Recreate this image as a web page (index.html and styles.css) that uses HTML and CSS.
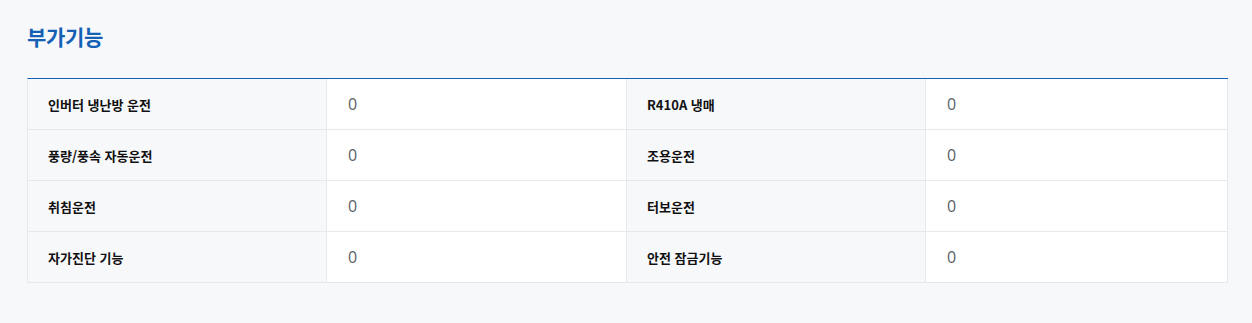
FILE: index.html
```html
<!DOCTYPE html>
<html lang="ko">
<head>
<meta charset="utf-8">
<link rel="stylesheet" href="styles.css">
</head>
<body>
<section class="section">
  <h2 class="title">부가기능</h2>
  <div class="spec">
    <div class="row">
      <div class="th">인버터 냉난방 운전</div><div class="td">0</div>
      <div class="th">R410A 냉매</div><div class="td">0</div>
    </div>
    <div class="row">
      <div class="th">풍량/풍속 자동운전</div><div class="td">0</div>
      <div class="th">조용운전</div><div class="td">0</div>
    </div>
    <div class="row">
      <div class="th">취침운전</div><div class="td">0</div>
      <div class="th">터보운전</div><div class="td">0</div>
    </div>
    <div class="row">
      <div class="th">자가진단 기능</div><div class="td">0</div>
      <div class="th">안전 잠금기능</div><div class="td">0</div>
    </div>
  </div>
</section>
</body>
</html>
```
FILE: styles.css
```css
html, body {
  margin: 0;
  padding: 0;
  background: #f7f8fa;
}
body {
  font-family: "Noto Sans CJK KR", "Noto Sans", sans-serif;
  color: #111;
}
.section {
  padding: 21px 25px 40px 27px;
}
.title {
  margin: 0;
  font-size: 21px;
  line-height: 30px;
  font-weight: 700;
  color: #1360b4;
  letter-spacing: -0.3px;
}
.spec {
  margin-top: 27px;
  width: 1200px;
  border-top: 1px solid #1360b4;
  border-left: 1px solid #e7e8eb;
}
.row {
  display: grid;
  grid-template-columns: 299px 300px 299px 302px;
}
.th, .td {
  border-bottom: 1px solid #e7e8eb;
  border-right: 1px solid #e7e8eb;
  display: flex;
  align-items: center;
  box-sizing: border-box;
  height: 51px;
}
.th {
  background: #f7f8fa;
  padding-left: 20px;
  font-size: 13px;
  font-weight: 700;
  color: #111;
}
.td {
  background: #fff;
  padding-left: 21px;
  font-size: 16px;
  color: #5a5f66;
  font-family: "Open Sans", "Noto Sans CJK KR", sans-serif;
}
```
